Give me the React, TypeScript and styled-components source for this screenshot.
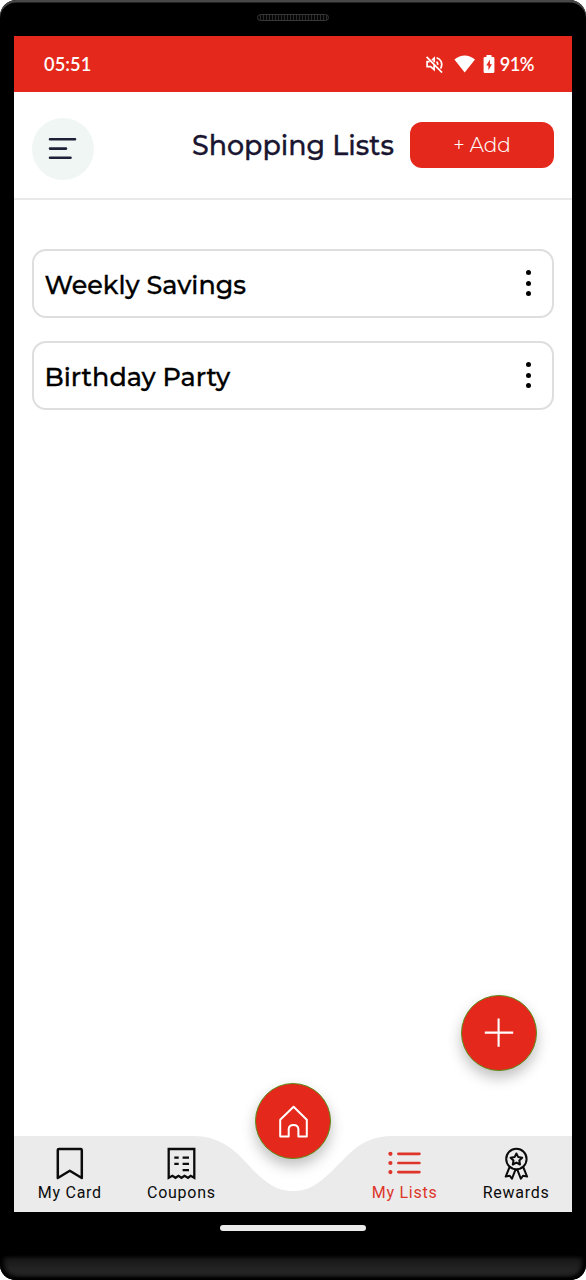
import React from "react";
import styled, { createGlobalStyle } from "styled-components";

const RED = "#e5281c";

const GlobalStyle = createGlobalStyle`
  * { box-sizing: border-box; }
  body { margin: 0; background: #fff; }
  button { border: 0; padding: 0; cursor: pointer; font: inherit; }
  svg { display: block; }
`;

const Phone = styled.div`
  width: 586px;
  height: 1280px;
  display: flex;
  flex-direction: column;
  background: #000;
  border-radius: 16px 16px 15px 15px;
  overflow: hidden;
  font-family: Montserrat, Inter, "Open Sans", sans-serif;
`;

const TopBezel = styled.div`
  height: 36px;
  flex: none;
  display: flex;
  justify-content: center;
  padding-top: 14px;
  border-radius: 16px 16px 0 0;
  box-shadow: inset 0 2.5px 0.5px #484848;
`;

const Speaker = styled.div`
  width: 72px;
  height: 7px;
  border: 1px solid #383838;
  border-radius: 4px;
  background: repeating-linear-gradient(90deg, #050505 0 2px, #2b2b2b 2px 3px);
`;

const Screen = styled.main`
  position: relative;
  height: 1176px;
  flex: none;
  margin: 0 14px;
  display: flex;
  flex-direction: column;
  background: #fff;
`;

const StatusBar = styled.div`
  height: 56px;
  flex: none;
  display: flex;
  align-items: center;
  justify-content: space-between;
  padding: 0 38px 0 30px;
  background: ${RED};
  color: #fff;
  font-family: "Google Sans", Lato, sans-serif;
  font-weight: 600;
`;

const Clock = styled.span`
  font-size: 18.2px;
  letter-spacing: 0.1px;
`;

const StatusIcons = styled.div`
  display: flex;
  align-items: center;
`;

const Battery = styled.span`
  margin-left: 5px;
  font-size: 18.2px;
  letter-spacing: -0.5px;
`;

const Header = styled.header`
  height: 108px;
  flex: none;
  display: flex;
  align-items: center;
  justify-content: space-between;
  padding: 0 18px;
  border-bottom: 2px solid #e9e9e9;
`;

const MenuButton = styled.button`
  width: 62px;
  height: 62px;
  margin-top: 8px;
  border-radius: 50%;
  background: #f0f6f3;
`;

const HeaderEnd = styled.div`
  display: flex;
  align-items: center;
  gap: 16px;
`;

const Title = styled.h1`
  margin: 0;
  width: 202px;
  white-space: nowrap;
  color: #1a1530;
  font-size: 26.9px;
  font-weight: 500;
  -webkit-text-stroke: 0.3px;
`;

const AddButton = styled.button`
  width: 144px;
  height: 46px;
  border-radius: 12px;
  background: ${RED};
  color: #fff;
  font-size: 20px;
  font-weight: 300;
  -webkit-text-stroke: 0.1px;
`;

const Lists = styled.section`
  display: flex;
  flex-direction: column;
  gap: 23px;
  padding: 49px 18px 0;
`;

const ListCard = styled.article`
  height: 69px;
  display: flex;
  align-items: center;
  justify-content: space-between;
  padding: 0 21px 0 10.5px;
  border: 2px solid #dedede;
  border-radius: 14px;
`;

const ListName = styled.h2`
  margin: 1px 0 0;
  color: #000;
  font-size: 25.4px;
  font-weight: 500;
  -webkit-text-stroke: 0.3px;
`;

const More = styled.button`
  display: flex;
  flex-direction: column;
  gap: 5.8px;
  margin-top: -1px;
  background: none;
`;

const Dot = styled.i`
  width: 5px;
  height: 5px;
  border-radius: 50%;
  background: #000;
`;

const RoundButton = styled.button<{ $left: number; $top: number }>`
  position: absolute;
  left: ${(p) => p.$left}px;
  top: ${(p) => p.$top}px;
  width: 76px;
  height: 76px;
  display: grid;
  place-items: center;
  border: 1.2px solid #5c8c16;
  border-radius: 50%;
  background: ${RED};
  box-shadow: 0 7px 14px rgba(0, 0, 0, 0.25);
`;

const Nav = styled.nav`
  position: relative;
  height: 76px;
  margin-top: auto;
  display: grid;
  grid-template-columns: repeat(5, 1fr);
`;

const NavShape = styled.svg`
  position: absolute;
  inset: 0;
`;

const NavItem = styled.a<{ $active?: boolean; $column: number }>`
  position: relative;
  grid-column: ${(p) => p.$column};
  display: flex;
  flex-direction: column;
  align-items: center;
  padding-top: 10px;
  color: ${(p) => (p.$active ? "#dd3529" : "#0b0b0b")};
  font: 400 16px/19px Roboto, sans-serif;
  letter-spacing: 0.75px;
  white-space: nowrap;

  svg { margin-bottom: 3px; }
`;

const BottomBezel = styled.div`
  flex: 1;
  display: flex;
  justify-content: center;
  padding-top: 13px;
  border-radius: 0 0 15px 15px;
  background: linear-gradient(#000 0 43px, #191919 48px, #242424 58px, #222 65px, #000 67px);
  box-shadow: inset 4px -2px 4px #000, inset -4px -2px 4px #000;
`;

const GestureBar = styled.div`
  width: 146px;
  height: 6px;
  border-radius: 3px;
  background: #ebebeb;
`;

const MuteIcon = () => (
  <svg width="18" height="18" viewBox="0 0 18 18" fill="none" stroke="#fff" strokeWidth="1.7">
    <path d="M1.6 1.8 17.1 17.6M4.6 6.7H2.1v5H5.6l3.5 3V9.7M7 5.2 9.2 3.2v4M11.6 6.7q1.3 1.2 1.1 3.2M11.6 2.7q5.4 2 5.1 7.2-.1 2-1.2 3.7" />
  </svg>
);

const WifiIcon = () => (
  <svg width="21" height="18" viewBox="0 0 21 18" style={{ marginLeft: 11 }}>
    <path d="M.4 4.4Q10.7-3.4 21 4.4L10.7 17.4Z" fill="#fff" />
  </svg>
);

const BatteryIcon = () => (
  <svg width="12" height="18" viewBox="0 0 12 18" style={{ marginLeft: 7.5 }}>
    <path d="M3.5 2V0h5v2h1.7q1.2 0 1.2 1.2v13.6q0 1.2-1.2 1.2H1.8Q.6 18 .6 16.8V3.2Q.6 2 1.8 2Z" fill="#fff" />
    <path d="M6.9 4.5 3.3 10.5h2.1v4.7l3.5-6H6.9Z" fill={RED} />
  </svg>
);

const MenuIcon = () => (
  <svg width="62" height="62" viewBox="0 0 62 62" stroke="#1d2138" strokeWidth="2.6" strokeLinecap="round">
    <path d="M18 21.2H43M18 30.6H34M18 39.8H38.5" />
  </svg>
);

const PlusIcon = () => (
  <svg width="30" height="30" viewBox="0 0 30 30" stroke="#fff" strokeWidth="2.1">
    <path d="M.8 14.6H29.2M14.6 .4V28.8" />
  </svg>
);

const HomeIcon = () => (
  <svg width="30" height="34" viewBox="0 0 30 34" fill="none" stroke="#fff" strokeWidth="2" strokeLinejoin="round">
    <path d="M2.2 15.7 15.6 2.7 28.8 15.7V32.4H20.4V25Q20 21.1 15.5 21.1T10.7 25V32.4H2.2Z" />
  </svg>
);

const BookmarkIcon = () => (
  <svg width="34" height="34" viewBox="0 0 34 34" fill="none" stroke="currentColor" strokeWidth="2.5" strokeLinejoin="round">
    <path d="M6.2 3H27.6Q28.8 3 28.8 4.2V32L16.8 24.8 4.8 32V4.2Q4.8 3 6.2 3Z" />
  </svg>
);

const CouponIcon = () => (
  <svg width="34" height="34" viewBox="0 0 34 34" fill="none" stroke="currentColor" strokeWidth="2.3">
    <path d="M4.7 3H30.3V31.8L26.6 29.8 24 31.8 20.5 29.8 17.5 31.8 14.5 29.8 11.5 31.8 8.4 29.8 4.7 31.8Z" />
    <path d="M10.3 11.6h4.4M18.6 11.6h6.4M10.3 17.8h4.4M18.6 17.8h6.4M18.6 24.2h6.4" />
  </svg>
);

const ListIcon = () => (
  <svg width="34" height="34" viewBox="0 0 34 34" stroke="currentColor" strokeWidth="2.7" strokeLinecap="round">
    <path d="M10.4 7.8H31.4M10.4 17H31.4M10.4 26.1H31.4" />
    <g fill="currentColor" stroke="none">
      <circle cx="2.4" cy="7.8" r="2.1" />
      <circle cx="2.4" cy="17" r="2.1" />
      <circle cx="2.4" cy="26.1" r="2.1" />
    </g>
  </svg>
);

const RewardIcon = () => (
  <svg width="34" height="34" viewBox="0 0 34 34" fill="none" stroke="currentColor" strokeWidth="2" strokeLinejoin="round">
    <circle cx="17.4" cy="13" r="10.2" />
    <path d="m17.4 7.5 1.8 3.6 4 .6-2.9 2.8.7 4-3.6-1.9-3.6 1.9.7-4-2.9-2.8 4-.6Z" />
    <path d="M10.6 21 6.7 30.6 10.8 29.8 12.9 32.8 16.7 23.2M24.2 21 28.1 30.6 24 29.8 21.9 32.8 18.1 23.2" />
  </svg>
);

const lists = ["Weekly Savings", "Birthday Party"];

export default function App() {
  return (
    <>
      <GlobalStyle />
      <Phone>
        <TopBezel><Speaker /></TopBezel>
        <Screen>
          <StatusBar>
            <Clock>05:51</Clock>
            <StatusIcons>
              <MuteIcon />
              <WifiIcon />
              <BatteryIcon />
              <Battery>91%</Battery>
            </StatusIcons>
          </StatusBar>
          <Header>
            <MenuButton aria-label="Menu"><MenuIcon /></MenuButton>
            <HeaderEnd>
              <Title>Shopping Lists</Title>
              <AddButton>+ Add</AddButton>
            </HeaderEnd>
          </Header>
          <Lists>
            {lists.map((name) => (
              <ListCard key={name}>
                <ListName>{name}</ListName>
                <More aria-label="More options"><Dot /><Dot /><Dot /></More>
              </ListCard>
            ))}
          </Lists>
          <Nav>
            <NavShape width="558" height="76" viewBox="0 0 558 76">
              <path
                fill="#ebebeb"
                d="M0 0H180C211 0 226 20 241 36C254 48 263 55 279 55C295 55 304 48 317 36C334 20 346 0 378 0H558V76H0Z"
              />
            </NavShape>
            <NavItem $column={1}><BookmarkIcon />My Card</NavItem>
            <NavItem $column={2}><CouponIcon />Coupons</NavItem>
            <NavItem $column={4} $active><ListIcon />My Lists</NavItem>
            <NavItem $column={5}><RewardIcon />Rewards</NavItem>
          </Nav>
          <RoundButton $left={447} $top={958.5} aria-label="Add list"><PlusIcon /></RoundButton>
          <RoundButton $left={241} $top={1047} aria-label="Home"><HomeIcon /></RoundButton>
        </Screen>
        <BottomBezel><GestureBar /></BottomBezel>
      </Phone>
    </>
  );
}
